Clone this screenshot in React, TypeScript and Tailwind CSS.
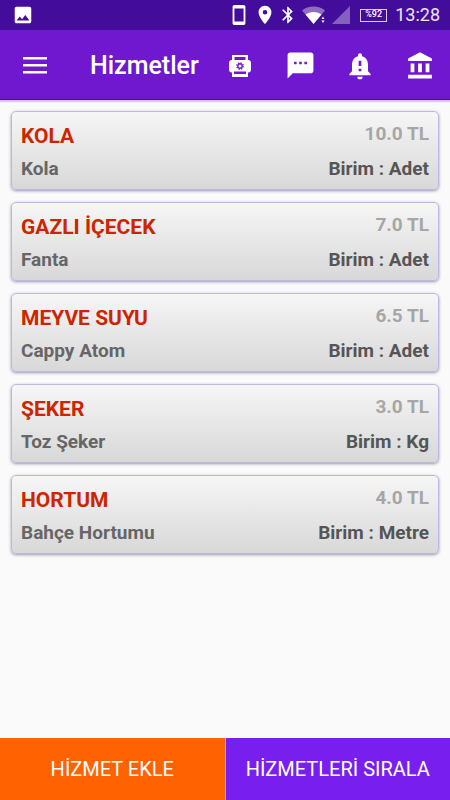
import {
  MdBluetooth,
  MdImage,
  MdNotificationImportant,
  MdPlace,
  MdSms,
  MdStayCurrentPortrait,
} from "react-icons/md";

const services = [
  { title: "KOLA", name: "Kola", price: "10.0 TL", unit: "Adet" },
  { title: "GAZLI İÇECEK", name: "Fanta", price: "7.0 TL", unit: "Adet" },
  { title: "MEYVE SUYU", name: "Cappy Atom", price: "6.5 TL", unit: "Adet" },
  { title: "ŞEKER", name: "Toz Şeker", price: "3.0 TL", unit: "Kg" },
  { title: "HORTUM", name: "Bahçe Hortumu", price: "4.0 TL", unit: "Metre" },
];

const WifiIcon = () => (
  <svg width="24" height="20" viewBox="0 0 24 20" fill="#fff">
    <path d="M0 5.500C6 0 17 0 23 5.500L11.500 19z" opacity="0.4" />
    <path d="M3.500 9.500C7.500 6 15.500 6 19.500 9.500L11.500 19z" />
    <path d="M19.500 14l1.500-2.500 1.500 2.500zM19.500 15.500h3L21 18z" />
  </svg>
);

const PrinterIcon = () => (
  <svg width="24" height="24" viewBox="0 0 24 24" fill="#fff">
    <path d="M4 1h16v5h-2.500V3h-11v3H4zM4 18h16v5H4z" />
    <path d="M4 6h16a3 3 0 0 1 3 3v6.500a3 3 0 0 1-3 3H4a3 3 0 0 1-3-3V9a3 3 0 0 1 3-3z" />
    <path d="M6 17.500h12v2.500H6z" fill="#7018cf" />
    <circle cx="12" cy="12" r="2.200" fill="none" stroke="#7018cf" strokeWidth="1.400" />
    <circle cx="12" cy="12" r="3.300" fill="none" stroke="#7018cf" strokeWidth="1.200" strokeDasharray="1.300 1.300" />
  </svg>
);

const BankIcon = () => (
  <svg width="30" height="30" viewBox="0 0 24 24" fill="#fff">
    <path d="M12 1L2.500 6v2h19V6zM16.500 10v7h3v-7zM2.500 22h19v-3h-19zM10.500 10v7h3v-7zM4.500 10v7h3v-7z" />
  </svg>
);

const StatusBar = () => (
  <div className="flex h-[30px] items-center justify-between bg-[#440c9b] pl-3 pr-[10px] text-white">
    <MdImage size={22} />
    <div className="flex items-center">
      <MdStayCurrentPortrait size={22} className="mr-1" />
      <MdPlace size={22} className="mr-[2px]" />
      <MdBluetooth size={20} className="mr-1" />
      <WifiIcon />
      <svg width="18" height="18" viewBox="0 0 18 18" className="ml-[6px] mr-[10px]">
        <path d="M18 0v18H0z" fill="#fff" opacity="0.35" />
      </svg>
      <span className="mr-2 flex h-[13px] w-[27px] items-center justify-center border border-white/80 text-[9px] font-medium">
        %92
      </span>
      <span className="text-[18px] leading-6 text-white/90">13:28</span>
    </div>
  </div>
);

const Header = () => (
  <header className="flex h-[70px] items-center border-b border-[#4c0f9e] bg-[#7018cf] pl-[22px] pr-[14px] pt-[2px] text-white shadow-[0_2px_1px_#dcc4fb]">
    <button aria-label="Menü" className="mr-[42px]">
      <svg width="26" height="18" viewBox="0 0 26 18" fill="#fff">
        <path d="M1 0h24v2.500H1zM1 7h24v2.500H1zM1 14h24v2.500H1z" />
      </svg>
    </button>
    <h1 className="flex-1 text-[25px] font-medium leading-8">Hizmetler</h1>
    <div className="flex items-center gap-7">
      <button aria-label="Yazdır" className="flex w-8 justify-center">
        <PrinterIcon />
      </button>
      <button aria-label="Mesajlar" className="flex w-8 justify-center">
        <MdSms size={31} />
      </button>
      <button aria-label="Bildirimler" className="flex w-8 justify-center">
        <MdNotificationImportant size={32} />
      </button>
      <button aria-label="Banka" className="flex w-8 justify-center">
        <BankIcon />
      </button>
    </div>
  </header>
);

export default function App() {
  return (
    <div className="flex min-h-screen flex-col bg-[#fafafa] font-[Roboto,sans-serif]">
      <StatusBar />
      <Header />
      <main className="flex-1 px-[11px] pt-[11px]">
        <ul className="flex flex-col gap-3">
          {services.map((service) => (
            <li
              key={service.title}
              className="rounded-[5px] border border-[#c3b5e2] bg-linear-to-b from-[#f6f6f6] to-[#d8d8d8] px-[9px] py-2 font-bold shadow-[0_1px_3px_rgba(60,50,100,0.5)]"
            >
              <div className="flex h-8 items-start justify-between">
                <h2 className="text-[21px] leading-8 text-[#cc2500]">{service.title}</h2>
                <span className="text-[19px] leading-7 text-[#a6a6a6]">{service.price}</span>
              </div>
              <div className="flex h-[29px] items-center justify-between pt-1 text-[19px] leading-6">
                <span className="text-[#666]">{service.name}</span>
                <span className="text-[#555]">Birim : {service.unit}</span>
              </div>
            </li>
          ))}
        </ul>
      </main>
      <footer className="grid h-[62px] grid-cols-2 gap-px bg-[#d0b0d8] text-[20px] text-white">
        <button className="bg-[#ff6200]">HİZMET EKLE</button>
        <button className="bg-[#781ff0]">HİZMETLERİ SIRALA</button>
      </footer>
    </div>
  );
}
